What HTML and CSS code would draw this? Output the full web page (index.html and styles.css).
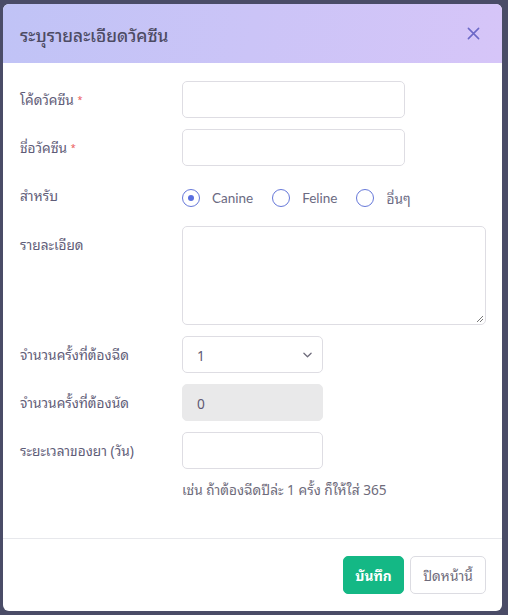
FILE: index.html
```html
<!DOCTYPE html>
<html lang="th">
<head>
<meta charset="utf-8">
<title>ระบุรายละเอียดวัคซีน</title>
<link rel="stylesheet" href="styles.css">
</head>
<body>
<div class="modal">
  <div class="modal-header">
    <h5 class="modal-title">ระบุรายละเอียดวัคซีน</h5>
    <button class="close" type="button" aria-label="Close">
      <svg viewBox="0 0 14 14" width="13" height="13"><path d="M1.5 1.5 L12.5 12.5 M12.5 1.5 L1.5 12.5" stroke="currentColor" stroke-width="1.7" stroke-linecap="round" fill="none"/></svg>
    </button>
  </div>
  <div class="modal-body">
    <div class="row">
      <label class="label">โค้ดวัคซีน <span class="req">*</span></label>
      <div class="field"><input class="input w-text" type="text"></div>
    </div>
    <div class="row">
      <label class="label">ชื่อวัคซีน <span class="req">*</span></label>
      <div class="field"><input class="input w-text" type="text"></div>
    </div>
    <div class="row">
      <label class="label">สำหรับ</label>
      <div class="field radios">
        <label class="radio"><span class="dot checked"></span><span class="lat">Canine</span></label>
        <label class="radio"><span class="dot"></span><span class="lat">Feline</span></label>
        <label class="radio"><span class="dot"></span><span>อื่นๆ</span></label>
      </div>
    </div>
    <div class="row">
      <label class="label">รายละเอียด</label>
      <div class="field"><div class="textarea"><svg class="grip" viewBox="0 0 8 8" width="8" height="8"><path d="M7 1 L1 7 M7 4 L4 7" stroke="#777" stroke-width="1" fill="none"/></svg></div></div>
    </div>
    <div class="row">
      <label class="label">จำนวนครั้งที่ต้องฉีด</label>
      <div class="field"><div class="input w-select select"><span>1</span><svg viewBox="0 0 10 6" width="9" height="6"><path d="M1 1 L5 5 L9 1" stroke="#6e6b7b" stroke-width="1.4" fill="none" stroke-linecap="round" stroke-linejoin="round"/></svg></div></div>
    </div>
    <div class="row">
      <label class="label">จำนวนครั้งที่ต้องนัด</label>
      <div class="field"><div class="input w-select disabled">0</div></div>
    </div>
    <div class="row">
      <label class="label">ระยะเวลาของยา (วัน)</label>
      <div class="field">
        <input class="input w-select" type="text">
        <div class="help">เช่น ถ้าต้องฉีดปีล่ะ 1 ครั้ง ก็ให้ใส่ 365</div>
      </div>
    </div>
  </div>
  <div class="modal-footer">
    <button class="btn btn-save" type="button">บันทึก</button>
    <button class="btn btn-close" type="button">ปิดหน้านี้</button>
  </div>
</div>
</body>
</html>
```

FILE: styles.css
```css
html, body {
  margin: 0;
  padding: 0;
}
body {
  background: #4a4c67;
  font-family: "Noto Sans Thai Looped", "Noto Sans", "Noto Sans Thai", sans-serif;
  font-size: 13.7px;
  color: #6e6b7b;
  padding: 4px 6px 4px 3px;
  height: 615px;
  box-sizing: border-box;
}
.modal {
  width: 499px;
  height: 607px;
  background: #fff;
  border-radius: 6px;
  overflow: hidden;
  display: flex;
  flex-direction: column;
}
.modal-header {
  height: 59px;
  flex: none;
  display: flex;
  align-items: center;
  justify-content: space-between;
  padding: 0 22px 0 17px;
  background: linear-gradient(100deg, #c0c3f6 0%, #cbc4f7 50%, #d6c5f8 100%);
}
.modal-title {
  margin: 0;
  font-size: 17.3px;
  font-weight: 500;
  color: #4d4b63;
}
.close {
  border: 0;
  background: none;
  padding: 0;
  color: #6c68c7;
  display: flex;
}
.modal-body {
  flex: 1;
  padding: 18px 16px 0 17px;
  display: flex;
  flex-direction: column;
  gap: 11px;
}
.row {
  display: grid;
  grid-template-columns: 162px 1fr;
  align-items: start;
}
.label {
  height: 37px;
  line-height: 37px;
  overflow: visible;
  color: #5f5d78;
}
.req {
  color: #ea5455;
  font-size: 9px;
  vertical-align: 2px;
}
.field {
  min-height: 37px;
}
.input {
  box-sizing: border-box;
  height: 37px;
  border: 1px solid #dedde3;
  border-radius: 5px;
  background: #fff;
  padding: 0 14px;
  font: inherit;
  color: #5e5873;
  display: flex;
  align-items: center;
}
.w-text { width: 223px; }
.w-select { width: 141px; }
.select {
  justify-content: space-between;
  padding-right: 10px;
}
.disabled {
  background: #e9e9ea;
  border-color: #e9e9ea;
}
.textarea {
  box-sizing: border-box;
  width: 304px;
  height: 99px;
  border: 1px solid #dedde3;
  border-radius: 5px;
  position: relative;
}
.grip {
  position: absolute;
  right: 1px;
  bottom: 1px;
}
.radios {
  box-sizing: border-box;
  display: flex;
  align-items: center;
  height: 38px;
  padding-top: 3px;
}
.radio {
  display: flex;
  align-items: center;
  gap: 12px;
  margin-right: 19px;
  color: #6b6a82;
}
.lat {
  font-family: "Lato", sans-serif;
  font-size: 13.5px;
}
.dot {
  box-sizing: border-box;
  width: 18px;
  height: 18px;
  border-radius: 50%;
  border: 1px solid #6678d9;
  display: flex;
  align-items: center;
  justify-content: center;
}
.dot.checked::after {
  content: "";
  width: 6px;
  height: 6px;
  border-radius: 50%;
  background: #5a6fe0;
}
.help {
  margin-top: 9px;
  color: #6e6b7b;
}
.modal-footer {
  flex: none;
  border-top: 1px solid #e7e8ec;
  display: flex;
  justify-content: flex-end;
  gap: 6px;
  padding: 17px 16px 17px 0;
}
.btn {
  height: 38px;
  border-radius: 5px;
  font: inherit;
  padding: 0;
}
.btn-save {
  width: 61px;
  background: #14b885;
  border: 1px solid #14b885;
  color: #fff;
  font-weight: 700;
}
.btn-close {
  width: 76px;
  background: #fff;
  border: 1px solid #dcdce2;
  color: #6e6b7b;
}
```
